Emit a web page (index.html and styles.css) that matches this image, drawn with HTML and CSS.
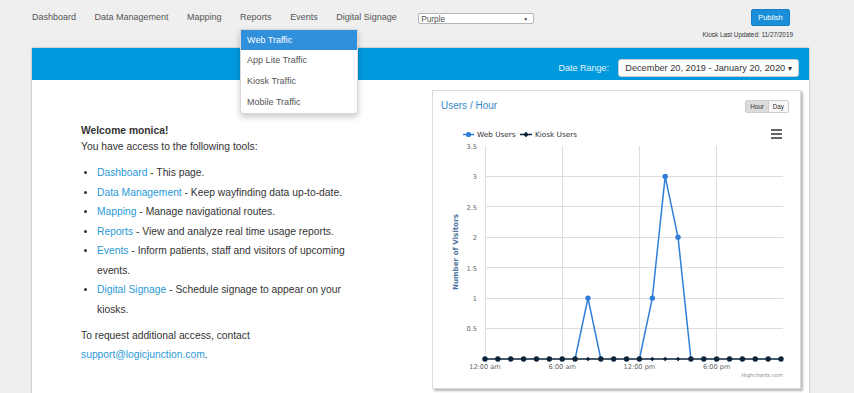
FILE: index.html
```html
<!DOCTYPE html>
<html>
<head>
<meta charset="utf-8">
<link rel="stylesheet" href="styles.css">
</head>
<body>
<header class="topbar">
  <nav class="nav">
    <a class="nav-item">Dashboard</a>
    <a class="nav-item">Data Management</a>
    <a class="nav-item">Mapping</a>
    <a class="nav-item nav-open">Reports
      <div class="dropdown">
        <div class="dd-item dd-active">Web Traffic</div>
        <div class="dd-item">App Lite Traffic</div>
        <div class="dd-item">Kiosk Traffic</div>
        <div class="dd-item">Mobile Traffic</div>
      </div>
    </a>
    <a class="nav-item">Events</a>
    <a class="nav-item">Digital Signage</a>
  </nav>
  <div class="theme-select"><span>Purple</span><span class="sel-arrow">▼</span></div>
  <div class="publish-block">
    <button class="publish">Publish</button>
    <div class="updated">Kiosk Last Updated: 11/27/2019</div>
  </div>
</header>

<main class="panel">
  <div class="panel-head">
    <span class="range-label">Date Range:</span>
    <button class="range-btn">December 20, 2019 - January 20, 2020 <span class="caret">▾</span></button>
  </div>
  <div class="panel-body">
    <section class="intro">
      <p class="welcome">Welcome monica!</p>
      <p class="line">You have access to the following tools:</p>
      <ul class="tools">
        <li><a>Dashboard</a> - This page.</li>
        <li><a>Data Management</a> - Keep wayfinding data up-to-date.</li>
        <li><a>Mapping</a> - Manage navigational routes.</li>
        <li><a>Reports</a> - View and analyze real time usage reports.</li>
        <li><a>Events</a> - Inform patients, staff and visitors of upcoming events.</li>
        <li><a>Digital Signage</a> - Schedule signage to appear on your kiosks.</li>
      </ul>
      <p class="contact">To request additional access, contact <a>support@logicjunction.com</a>.</p>
    </section>

    <section class="card">
      <div class="card-head">
        <h2 class="card-title">Users / Hour</h2>
        <div class="toggle">
          <span class="tg tg-on">Hour</span><span class="tg">Day</span>
        </div>
      </div>
      <svg class="chart" width="369" height="265" viewBox="0 0 369 265">
        <g stroke="#dedede" stroke-width="1">
          <line x1="53" y1="56.5" x2="351" y2="56.5"/>
          <line x1="53" y1="86.5" x2="351" y2="86.5"/>
          <line x1="53" y1="117.5" x2="351" y2="117.5"/>
          <line x1="53" y1="147.5" x2="351" y2="147.5"/>
          <line x1="53" y1="178.5" x2="351" y2="178.5"/>
          <line x1="53" y1="208.5" x2="351" y2="208.5"/>
          <line x1="53.5" y1="26" x2="53.5" y2="239"/>
          <line x1="130.5" y1="26" x2="130.5" y2="239"/>
          <line x1="207.5" y1="26" x2="207.5" y2="239"/>
          <line x1="284.5" y1="26" x2="284.5" y2="239"/>
        </g>
        <g class="ylab" text-anchor="end">
          <text x="45" y="28.5">3.5</text>
          <text x="45" y="59">3</text>
          <text x="45" y="89.5">2.5</text>
          <text x="45" y="120">2</text>
          <text x="45" y="150.5">1.5</text>
          <text x="45" y="181">1</text>
          <text x="45" y="211">0.5</text>
        </g>
        <text class="ytitle" transform="translate(26 132) rotate(-90)" text-anchor="middle">Number of Visitors</text>
        <g class="xlab" text-anchor="middle">
          <text x="53" y="249">12:00 am</text>
          <text x="130.2" y="249">6:00 am</text>
          <text x="207.4" y="249">12:00 pm</text>
          <text x="284.7" y="249">6:00 pm</text>
        </g>
        <text class="credit" x="351" y="257" text-anchor="end">Highcharts.com</text>

        <!-- legend -->
        <line x1="31" y1="14.5" x2="42" y2="14.5" stroke="#2f7ed8" stroke-width="1.5"/>
        <circle cx="36.5" cy="14.5" r="2.6" fill="#2f7ed8"/>
        <text class="legend" x="45" y="17">Web Users</text>
        <line x1="88" y1="14.5" x2="100" y2="14.5" stroke="#0d233a" stroke-width="1.5"/>
        <path d="M94 11.8 L96.7 14.5 L94 17.2 L91.3 14.5 Z" fill="#0d233a"/>
        <text class="legend" x="103" y="17">Kiosk Users</text>

        <!-- menu icon -->
        <g stroke="#666" stroke-width="2">
          <line x1="339" y1="10" x2="350" y2="10"/>
          <line x1="339" y1="14" x2="350" y2="14"/>
          <line x1="339" y1="18" x2="350" y2="18"/>
        </g>

        <!-- series -->
        <line x1="53" y1="239" x2="349" y2="239" stroke="#0d233a" stroke-width="1.5"/>
        <polyline fill="none" stroke="#2f7ed8" stroke-width="1.5" stroke-linejoin="round"
          points="143.09,239 155.96,178.1 168.83,239"/>
        <polyline fill="none" stroke="#2f7ed8" stroke-width="1.5" stroke-linejoin="round"
          points="207.44,239 220.31,178.1 233.18,56.4 246.05,117.3 258.92,239"/>
        <g fill="#2f7ed8">
          <circle cx="155.96" cy="178.1" r="2.7"/>
          <circle cx="220.31" cy="178.1" r="2.7"/>
          <circle cx="233.18" cy="56.4" r="2.7"/>
          <circle cx="246.05" cy="117.3" r="2.7"/>
        </g>
        <g fill="#0d233a">
          <circle cx="53" cy="239" r="2.7"/>
          <circle cx="65.87" cy="239" r="2.7"/>
          <circle cx="78.74" cy="239" r="2.7"/>
          <circle cx="91.61" cy="239" r="2.7"/>
          <circle cx="104.48" cy="239" r="2.7"/>
          <circle cx="117.35" cy="239" r="2.7"/>
          <circle cx="130.22" cy="239" r="2.7"/>
          <circle cx="143.09" cy="239" r="2.7"/>
          <path d="M155.96 236.8 L158.16 239 L155.96 241.2 L153.76 239 Z"/>
          <circle cx="168.83" cy="239" r="2.7"/>
          <circle cx="181.7" cy="239" r="2.7"/>
          <circle cx="194.57" cy="239" r="2.7"/>
          <circle cx="207.44" cy="239" r="2.7"/>
          <path d="M220.31 236.8 L222.51 239 L220.31 241.2 L218.11 239 Z"/>
          <path d="M233.18 236.8 L235.38 239 L233.18 241.2 L230.98 239 Z"/>
          <path d="M246.05 236.8 L248.25 239 L246.05 241.2 L243.85 239 Z"/>
          <circle cx="258.92" cy="239" r="2.7"/>
          <circle cx="271.79" cy="239" r="2.7"/>
          <circle cx="284.66" cy="239" r="2.7"/>
          <circle cx="297.53" cy="239" r="2.7"/>
          <circle cx="310.4" cy="239" r="2.7"/>
          <circle cx="323.27" cy="239" r="2.7"/>
          <circle cx="336.14" cy="239" r="2.7"/>
          <circle cx="349.01" cy="239" r="2.7"/>
        </g>
      </svg>
    </section>
  </div>
</main>
</body>
</html>
```

FILE: styles.css
```css
* { box-sizing: border-box; }
html, body { margin: 0; padding: 0; }
body {
  background: #efefef;
  font-family: "Liberation Sans", Arial, sans-serif;
  color: #333;
  width: 854px;
  height: 393px;
  overflow: hidden;
}
a { text-decoration: none; }

.topbar {
  height: 48px;
  display: flex;
  align-items: flex-start;
  padding-left: 32px;
  padding-right: 61px;
}
.nav {
  display: flex;
  gap: 18.5px;
  margin-top: 11px;
}
.nav-item {
  font-size: 9px;
  line-height: 12px;
  color: #555;
  position: relative;
}
.dropdown {
  position: absolute;
  left: 0;
  top: 18px;
  width: 118px;
  background: #fff;
  border: 1px solid rgba(0,0,0,0.15);
  border-radius: 0 0 4px 4px;
  box-shadow: 0 3px 6px rgba(0,0,0,0.22);
  z-index: 10;
}
.dd-item {
  height: 21px;
  line-height: 21px;
  padding-left: 6px;
  font-size: 9px;
  color: #555;
}
.dd-active {
  background: #3090dc;
  color: #fff;
  height: 20px;
  line-height: 20px;
}

.theme-select {
  margin-left: 21.5px;
  margin-top: 13px;
  width: 116px;
  height: 11px;
  border: 1px solid #b5b5b5;
  border-radius: 2px;
  background: #fff;
  display: flex;
  justify-content: space-between;
  align-items: center;
  padding: 0 5px 0 2px;
  font-size: 8.3px;
  color: #555;
}
.sel-arrow { font-size: 5px; color: #444; }

.publish-block {
  margin-left: auto;
  display: flex;
  flex-direction: column;
  align-items: flex-end;
  margin-top: 9px;
}
.publish {
  width: 39px;
  height: 17px;
  margin-right: 3px;
  background: #1a8ed8;
  border: 1px solid #1580c5;
  border-radius: 2px;
  color: #fff;
  font-family: "Liberation Sans", Arial, sans-serif;
  font-size: 7.5px;
  padding: 0;
}
.updated {
  margin-top: 5px;
  font-size: 6.4px;
  color: #333;
}

.panel {
  margin-left: 32px;
  width: 777px;
  background: #fff;
  box-shadow: 0 0 2px rgba(0,0,0,0.35);
}
.panel-head {
  height: 32px;
  background: #0099dd;
  display: flex;
  justify-content: flex-end;
  align-items: flex-end;
  padding: 0 10px 3px 0;
}
.range-label {
  color: #e6f4fc;
  font-size: 9px;
  margin-right: 9px;
  line-height: 18px;
  margin-bottom: 0;
}
.range-btn {
  width: 181px;
  height: 18px;
  background: #fff;
  border: 1px solid #ccc;
  border-radius: 3px;
  font-family: "Liberation Sans", Arial, sans-serif;
  font-size: 9.2px;
  color: #333;
  padding: 0;
  text-align: center;
}
.caret { font-size: 8px; }

.panel-body {
  display: flex;
  min-height: 330px;
}
.intro {
  width: 400px;
  padding: 43px 80px 0 49px;
  font-size: 10.3px;
}
.intro a { color: #2a9ad8; }
.welcome {
  margin: 0;
  font-weight: bold;
  line-height: 16px;
}
.line {
  margin: 0;
  line-height: 16px;
}
.tools {
  margin: 8px 0 0 0;
  padding-left: 16px;
  list-style: disc;
  line-height: 19.5px;
}
.tools li::marker { font-size: 10px; }
.contact {
  margin: 6.5px 0 0 0;
  line-height: 19.5px;
}

.card {
  width: 369px;
  height: 299px;
  margin-top: 10px;
  border: 1px solid #dcdcdc;
  box-shadow: 2px 2px 2px rgba(0,0,0,0.28);
  background: #fff;
  display: flex;
  flex-direction: column;
}
.card-head {
  height: 29px;
  display: flex;
  align-items: center;
  justify-content: space-between;
  padding: 0 11px 0 8px;
}
.card-title {
  margin: 0;
  font-weight: normal;
  font-size: 10px;
  color: #3a87c8;
}
.toggle {
  display: flex;
  border: 1px solid #ccc;
  border-radius: 2px;
  height: 13px;
  margin-top: 2px;
}
.tg {
  font-size: 6.3px;
  line-height: 11px;
  padding: 0 4px;
  background: #f7f7f7;
  color: #333;
}
.tg-on { background: #dcdcdc; border-right: 1px solid #ccc; }

.chart {
  display: block;
  margin-left: -1px;
  font-family: "DejaVu Sans", Verdana, sans-serif;
}
.ylab text, .xlab text { font-size: 6.6px; fill: #666; }
.ytitle { font-size: 7.2px; fill: #4d759e; font-weight: bold; }
.legend { font-size: 7.3px; fill: #333; }
.credit { font-size: 5.3px; fill: #909090; }
```
